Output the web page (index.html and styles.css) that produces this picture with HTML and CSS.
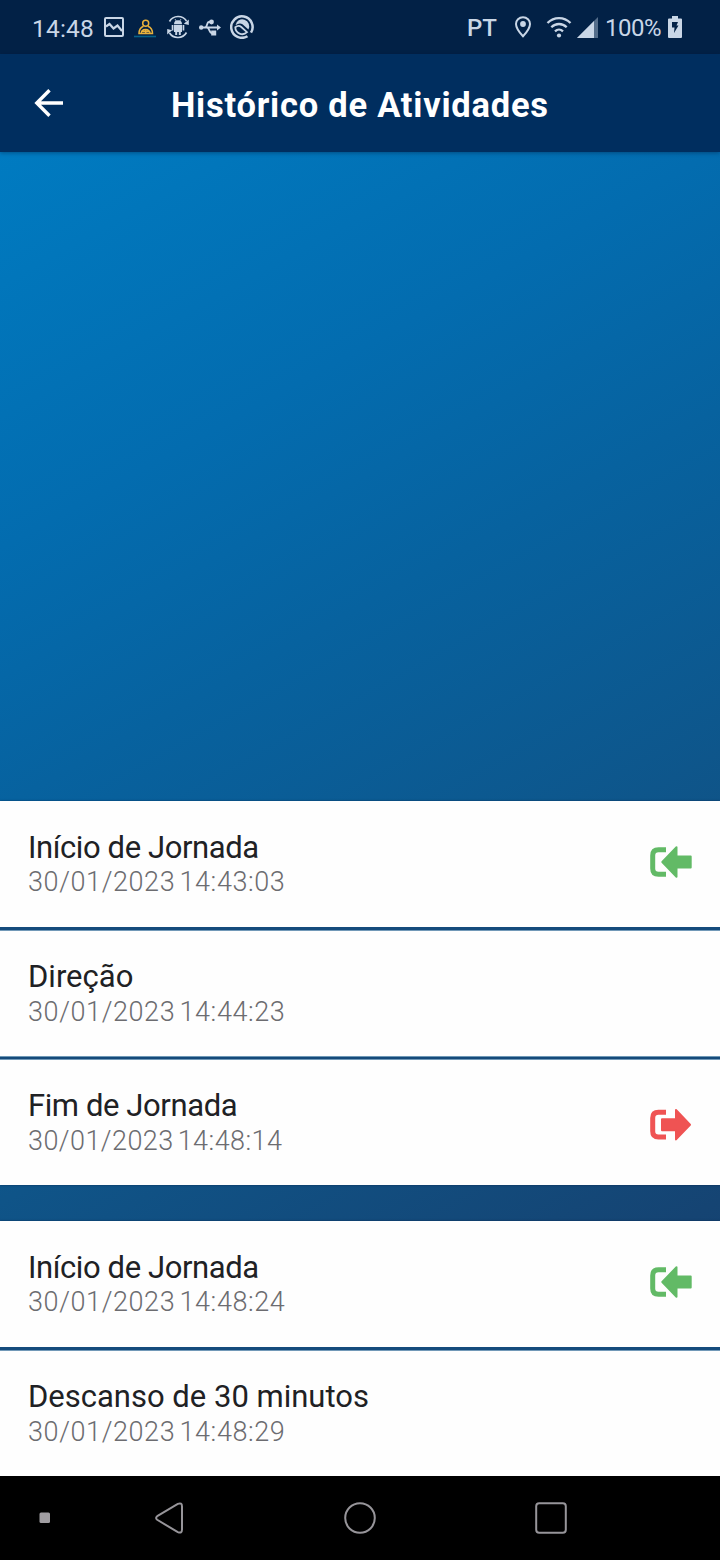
FILE: index.html
```
<!DOCTYPE html>
<html lang="pt">
<head>
<meta charset="utf-8">
<title>Histórico de Atividades</title>
<link rel="stylesheet" href="styles.css">
</head>
<body>
<div class="screen">
  <div class="status">
    <div class="status-left">
      <span class="clock">14:48</span>
      <svg class="ic" width="20" height="20" viewBox="0 0 20 20"><rect x="1" y="1" width="18" height="18" rx="1" fill="none" stroke="#c9d6e6" stroke-width="2"/><path d="M2 9.500 5.500 7l4 4.500 4-3 4.500 5.500" fill="none" stroke="#c9d6e6" stroke-width="2.200"/></svg>
      <svg class="ic driver" width="24" height="24" viewBox="0 0 24 24"><path d="M1 21.500h22" stroke="#07628a" stroke-width="1.600"/><g fill="none" stroke="#e9b23c" stroke-width="1.500"><circle cx="12.700" cy="8.300" r="3"/><path d="M10.500 11.200c-2.800 1.200-4.500 3.800-4.500 7.300h13.500c0-3.500-1.700-6.100-4.500-7.300M8.300 18.500c0-5.200 8.800-5.200 8.800 0M12.700 15v3M9.500 16.500h6.500"/></g></svg>
      <svg class="ic sync" width="24" height="24" viewBox="0 0 24 24"><g fill="none" stroke="#c9d6e6" stroke-width="1.700"><path d="M3.500 6.500a10 10 0 0 1 17-.5M20.500 17.500a10 10 0 0 1-17 .5"/></g><path d="M22.800 4.500v5.500l-5-1.200zM1.200 19.500V14l5 1.200z" fill="#c9d6e6"/><path d="M8 9.200a4 4 0 0 1 8 0zM8 10h8v7h-1.200v3h-2v-3h-1.600v3h-2v-3H8zM5.700 10h1.700v5.500H5.700zM16.600 10h1.700v5.500h-1.700z" fill="#c9d6e6"/><path d="m9 4 1.500 2.500M15 4l-1.500 2.500" stroke="#c9d6e6" stroke-width=".8"/></svg>
      <svg class="ic usb" width="22" height="18" viewBox="0 0 22 18"><path d="M2 8.500h17M6 8.500C8.500 8.500 7.500 3 10 3h2M8 8.500c2.500 0 2 5.500 5 5.500" fill="none" stroke="#c9d6e6" stroke-width="1.800"/><circle cx="2.200" cy="8.500" r="2.200" fill="#c9d6e6"/><circle cx="12.500" cy="3" r="2.400" fill="#c9d6e6"/><path d="M18 5.500 22 8.500l-4 3zM12.200 11.500h5v5h-5z" fill="#c9d6e6"/></svg>
      <svg class="ic round" width="24" height="24" viewBox="0 0 24 24"><path d="M17.500 21.200A10.700 10.700 0 1 1 21 17.700" fill="none" stroke="#c9d6e6" stroke-width="2.500"/><path d="M5.500 10.200A6.900 6.900 0 1 1 18.400 14.500L12.500 9.300Q9.500 7.300 5.500 10.200z" fill="#c9d6e6"/><path d="M5.300 12.300Q8.500 9.700 11.300 12L17 17.200A6.900 6.900 0 0 1 5.300 12.300z" fill="none" stroke="#c9d6e6" stroke-width="1.800"/></svg>
    </div>
    <div class="status-right">
      <span class="lang">PT</span>
      <svg class="ic pin" width="18" height="22" viewBox="0 0 18 22"><path d="M9 1.200c-4 0-7 3-7 6.800 0 4.800 7 12.300 7 12.300S16 12.800 16 8c0-3.800-3-6.800-7-6.800z" fill="none" stroke="#c9d6e6" stroke-width="2"/><circle cx="9" cy="8" r="2.900" fill="#c9d6e6"/></svg>
      <svg class="ic wifi" width="26" height="24" viewBox="0 0 26 24"><g fill="none" stroke="#c9d6e6" stroke-width="2.300"><path d="M1.500 8c6.500-6.500 16.500-6.500 23 0M5.300 12.300c4.400-4.400 11-4.400 15.400 0M9 16.300c2.400-2.300 5.600-2.300 8 0"/></g><circle cx="13" cy="20.500" r="2.100" fill="#c9d6e6"/></svg>
      <svg class="ic signal" width="21" height="21" viewBox="0 0 21 21"><path d="M0 21 21 0v21z" fill="#546d8a"/><path d="M0 21 17 4v17z" fill="#c9d6e6"/></svg>
      <span class="pct">100%</span>
      <svg class="ic battery" width="14" height="22" viewBox="0 0 14 22"><path d="M4 0h6v2.500h3a1 1 0 0 1 1 1V21a1 1 0 0 1-1 1H1a1 1 0 0 1-1-1V3.500a1 1 0 0 1 1-1h3z" fill="#c9d6e6"/><path d="M4 6h6L8.500 9.500H10.500L6 17l.5-5.500H4z" fill="#022146"/></svg>
    </div>
  </div>

  <header class="appbar">
    <svg class="back" width="30" height="30" viewBox="0 0 30 30"><path d="M29 15H3M15.500 2.300 2.800 15l12.700 12.700" fill="none" stroke="#fff" stroke-width="3.400"/></svg>
    <h1 class="title">Histórico de Atividades</h1>
  </header>

  <main class="content">
    <section class="group">
      <article class="row tall">
        <div><p class="name jornada">Início de Jornada</p><p class="date">30/01/2023 14:43:03</p></div>
        <svg class="in" width="44" height="34" viewBox="0 0 44 34"><path d="M17 4.700H9.500Q3.700 4.700 3.700 10.500v13q0 5.800 5.800 5.800H17" fill="none" stroke="#62ba66" stroke-width="5"/><path d="M13.300 17 27.500 2.200v9.300h14.200v11H27.500v9.300z" fill="#62ba66" stroke="#62ba66" stroke-width="2" stroke-linejoin="round"/></svg>
      </article>
      <div class="line"></div>
      <article class="row">
        <div><p class="name">Direção</p><p class="date">30/01/2023 14:44:23</p></div>
      </article>
      <div class="line even"></div>
      <article class="row">
        <div><p class="name jornada">Fim de Jornada</p><p class="date narrow">30/01/2023 14:48:14</p></div>
        <svg class="out" width="44" height="34" viewBox="0 0 44 34"><path d="M17 4.200H9.500Q3.700 4.200 3.700 10v13.300q0 5.800 5.800 5.800H17" fill="none" stroke="#ef5353" stroke-width="5"/><path d="M41 16.700 27 2v9.200H13v11h14v9.200z" fill="#ef5353" stroke="#ef5353" stroke-width="2" stroke-linejoin="round"/></svg>
      </article>
    </section>
    <section class="group">
      <article class="row tall">
        <div><p class="name jornada">Início de Jornada</p><p class="date">30/01/2023 14:48:24</p></div>
        <svg class="in" width="44" height="34" viewBox="0 0 44 34"><path d="M17 4.700H9.500Q3.700 4.700 3.700 10.500v13q0 5.800 5.800 5.800H17" fill="none" stroke="#62ba66" stroke-width="5"/><path d="M13.300 17 27.500 2.200v9.300h14.200v11H27.500v9.300z" fill="#62ba66" stroke="#62ba66" stroke-width="2" stroke-linejoin="round"/></svg>
      </article>
      <div class="line"></div>
      <article class="row">
        <div><p class="name">Descanso de 30 minutos</p><p class="date">30/01/2023 14:48:29</p></div>
      </article>
    </section>
  </main>

  <nav class="navbar">
    <svg class="n-dot" width="12" height="12"><rect x=".5" y=".5" width="10.500" height="10.500" rx="1.500" fill="#a09da1"/></svg>
    <svg class="n-back" width="30" height="32" viewBox="0 0 30 32"><path d="M2.200 14.200 22.800 1.900q4.200-1.600 4.200 2.500v23.200q0 4.100-4.200 2.500L2.200 17.800q-2.200-1.800 0-3.600z" fill="none" stroke="#97959a" stroke-width="2"/></svg>
    <svg class="n-home" width="32" height="32"><circle cx="16" cy="16" r="14.800" fill="none" stroke="#97959a" stroke-width="2"/></svg>
    <svg class="n-recent" width="32" height="32"><rect x="1.200" y="1.200" width="29.600" height="29.600" rx="3" fill="none" stroke="#97959a" stroke-width="2"/></svg>
  </nav>
</div>
</body>
</html>
```

FILE: styles.css
```
* { box-sizing: border-box; }
body { margin: 0; font-family: Roboto, "Noto Sans", sans-serif; }
p, h1 { margin: 0; white-space: nowrap; }
svg { display: block; flex: none; }
.screen { width: 720px; height: 1560px; display: flex; flex-direction: column; overflow: hidden; }

.status { height: 54px; flex: none; background: #022146; color: #c9d6e6; display: flex; justify-content: space-between; font-size: 24px; line-height: 28px; }
.status-left, .status-right { display: flex; align-items: flex-start; padding-top: 15px; }
.status-left { padding-left: 32px; }
.clock { width: 72px; font-size: 24.500px; letter-spacing: .2px; }
.status-left .ic { margin-top: 2px; }
.status-left .driver { margin: 0 0 0 9px; }
.status-left .sync { margin: 0 0 0 9px; }
.status-left .usb { margin: 4px 0 0 9px; }
.status-left .round { margin: 0 0 0 9px; }
.lang { width: 47px; margin-top: -1px; font-weight: 500; }
.pin { margin-top: 1px; }
.wifi { margin-left: 14px; }
.signal { margin: 2px 0 0 5px; }
.pct { width: 63px; margin-left: 7px; margin-top: -1px; letter-spacing: -.5px; }
.battery { margin-top: 1px; }
.status-right { width: 253px; }

.appbar { height: 98px; flex: none; background: #002e5f; color: #fff; display: flex; align-items: flex-start; padding: 34px 0 0 34px; box-shadow: 0 1px 4px rgba(0, 20, 50, .4); z-index: 1; }
.back { width: 30px; height: 30px; }
.title { margin-left: 107px; margin-top: -3px; font-size: 34.500px; line-height: 40px; font-weight: 700; letter-spacing: .76px; }

.content { height: 1324px; flex: none; display: flex; flex-direction: column; justify-content: flex-end; gap: 36px; background: linear-gradient(151deg, #007bc1 0%, #036caf 23%, #07629f 38%, #0f5488 61%, #154473 84%, #173c69 100%); }
.group { display: flex; flex-direction: column; box-shadow: 0 0 2px rgba(0, 25, 60, .6); }
.row { height: 125px; background: #fefefe; padding: 28px 27px 0 28px; display: flex; justify-content: space-between; }
.row.tall { height: 126px; padding-top: 29px; }
.row.tall .date { margin-top: -1px; }
.line { height: 4px; background: linear-gradient(#144b7c 3px, #7299b8 3px); }
.line.even { background: linear-gradient(#6f98b6 1px, #154a7a 1px 3px, #7299b8 3px); }
.name { font-size: 31px; line-height: 36px; color: #202124; }
.name.jornada { letter-spacing: -.4px; }
.date { font-size: 27px; line-height: 34px; color: #6c6c70; font-weight: 300; letter-spacing: .6px; word-spacing: -3px; }
.date.narrow { letter-spacing: .44px; }
.in { margin-top: 15px; }
.out { margin-top: 20px; }

.navbar { height: 84px; flex: none; background: #000; display: flex; align-items: center; padding-left: 39px; }
.n-back { margin-left: 104px; }
.n-home { margin-left: 158.500px; }
.n-recent { margin-left: 159.500px; }
```
